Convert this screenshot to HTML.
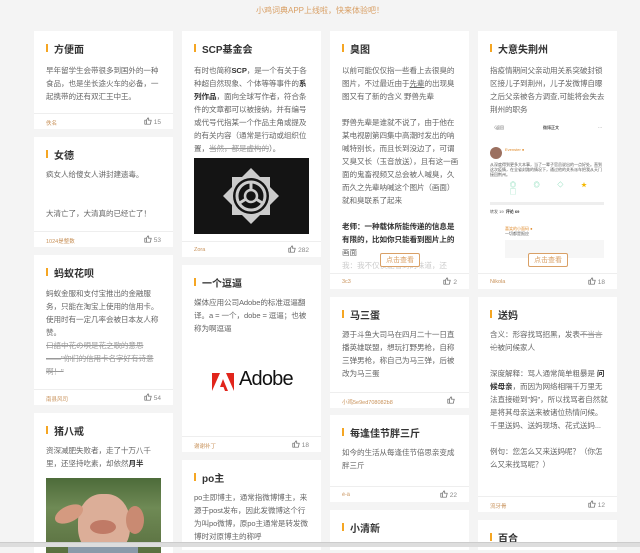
<!DOCTYPE html>
<html><head><meta charset="utf-8"><style>
*{margin:0;padding:0;box-sizing:border-box}
body{width:640px;height:547px;overflow:hidden;background:#f4f4f4;font-family:"Liberation Sans","Noto Sans CJK SC",sans-serif;position:relative}
.top{position:absolute;top:5px;left:0;width:640px;text-align:center;font-size:8px;color:#d9a066}
.c{position:absolute;background:#fff;width:139px;overflow:hidden}
.t{position:absolute;left:12px;top:10px;font-size:10px;font-weight:bold;color:#333;padding-left:8px}
.t:before{content:"";position:absolute;left:0;top:3px;width:2px;height:8px;background:#f5a623}
.b{position:absolute;left:12px;top:33px;width:118px;font-size:7.6px;line-height:13px;color:#666;letter-spacing:-.1px}
.b b{color:#333}
.f{position:absolute;left:0;right:0;height:16px;border-top:1px solid #eee;background:#fff;font-size:5.5px;color:#c8925a}
.f span{position:absolute;left:12px;top:5px}
.f i{position:absolute;right:12px;top:3px;font-style:normal;color:#888;font-size:6.5px}
.f i svg{vertical-align:-1px;margin-right:2px}
s{color:#999}
.btn{position:absolute;border:1px solid #d9a066;color:#d9a066;font-size:7px;padding:1px 5px;background:#fff;border-radius:2px}
.bar{position:absolute;left:0;top:542px;width:640px;height:5px;background:#ddd;border-top:1px solid #ccc}
</style></head><body>
<div class="top">小鸡词典APP上线啦，快来体验吧！</div>

<!-- col1 -->
<div class="c" style="left:34px;top:31px;height:98px">
<div class="t">方便面</div>
<div class="b">早年留学生会带很多到国外的一种食品，也是坐长途火车的必备，一起携带的还有双汇王中王。</div>
<div class="f" style="top:82px"><span>佚名</span><i><svg width="8" height="8" viewBox="0 0 10 10"><path d="M1 4h2v5H1zM3 4l2-3c1 0 1 1 1 2l-.5 1H9l-1 5H3" fill="none" stroke="#666" stroke-width=".9"/></svg>15</i></div>
</div>
<div class="c" style="left:34px;top:137px;height:110px">
<div class="t">女德</div>
<div class="b" style="top:31px">疯女人给傻女人讲封建遗毒。<br><br><br>大清亡了，大清真的已经亡了！</div>
<div class="f" style="top:94px"><span>1024是整数</span><i><svg width="8" height="8" viewBox="0 0 10 10"><path d="M1 4h2v5H1zM3 4l2-3c1 0 1 1 1 2l-.5 1H9l-1 5H3" fill="none" stroke="#666" stroke-width=".9"/></svg>53</i></div>
</div>
<div class="c" style="left:34px;top:255px;height:150px">
<div class="t">蚂蚁花呗</div>
<div class="b" style="top:32px">蚂蚁金服和支付宝推出的金融服务，只能在淘宝上使用的信用卡。使用时有一定几率会被日本友人称赞。<br><s>口語中花の唄是花之歌的意思——"你们的信用卡名字好有诗意啊！"</s></div>
<div class="f" style="top:134px"><span>南县风司</span><i><svg width="8" height="8" viewBox="0 0 10 10"><path d="M1 4h2v5H1zM3 4l2-3c1 0 1 1 1 2l-.5 1H9l-1 5H3" fill="none" stroke="#666" stroke-width=".9"/></svg>54</i></div>
</div>
<div class="c" style="left:34px;top:413px;height:140px">
<div class="t">猪八戒</div>
<div class="b" style="top:31px">资深减肥失败者，走了十万八千里，还坚持吃素，却依然<b>月半</b></div>
<div style="position:absolute;left:12px;top:65px;width:115px;height:75px;background:linear-gradient(#4d6b3a,#6f8a55 40%,#5a7040);overflow:hidden">
<div style="position:absolute;left:32px;top:16px;width:52px;height:62px;border-radius:45%;background:#dcae98"></div>
<div style="position:absolute;left:8px;top:28px;width:30px;height:16px;border-radius:50%;background:#d49a80;transform:rotate(-25deg)"></div>
<div style="position:absolute;left:80px;top:28px;width:18px;height:28px;border-radius:50%;background:#c98a72"></div>
<div style="position:absolute;left:44px;top:42px;width:26px;height:14px;border-radius:50%;background:#c07a66"></div>
<div style="position:absolute;left:22px;top:68px;width:70px;height:10px;background:#8a9aaa"></div>
</div>
</div>

<!-- col2 -->
<div class="c" style="left:182px;top:31px;height:226px">
<div class="t">SCP基金会</div>
<div class="b">有时也简称<b>SCP</b>，是一个有关于各种超自然现象、个体等等事件的<b>系列作品</b>，面向全球写作者，符合条件的文章都可以被接纳，并有编号或代号代指某一个作品主角或提及的有关内容（通常是行动或组织位置，<s>当然，都是虚构的</s>）。</div>
<div style="position:absolute;left:12px;top:127px;width:115px;height:76px;background:#141414">
<svg width="115" height="76" viewBox="0 0 115 76"><g transform="translate(57,38)" fill="none"><path d="M0-28L9-19 19-19 19-9 28 0 19 9 19 19 9 19 0 28-9 19-19 19-19 9-28 0-19-9-19-19-9-19Z" fill="#ccc"/><circle r="18" fill="#141414"/><circle r="14" stroke-width="3" stroke="#ccc"/><circle r="6" stroke-width="2.5" stroke="#ccc"/><path d="M0-6V-14M5 3l8 5M-5 3l-8 5" stroke-width="3" stroke="#ccc"/></g></svg></div>
<div class="f" style="top:210px"><span>Zora</span><i><svg width="8" height="8" viewBox="0 0 10 10"><path d="M1 4h2v5H1zM3 4l2-3c1 0 1 1 1 2l-.5 1H9l-1 5H3" fill="none" stroke="#666" stroke-width=".9"/></svg>282</i></div>
</div>
<div class="c" style="left:182px;top:265px;height:187px">
<div class="t">一个逗逼</div>
<div class="b" style="top:31px">媒体应用公司Adobe的标准逗逼翻译。a = 一个，dobe = 逗逼；也被称为啊逗逼</div>
<svg style="position:absolute;left:30px;top:108px" width="22" height="18" viewBox="0 0 22 18"><path d="M0 0h8L0 18zM14 0h8v18zM11 6l5 12h-3l-1.5-4H8z" fill="#e1251b"/></svg>
<div style="position:absolute;left:57px;top:103px;font-size:20px;color:#111;letter-spacing:-.8px">Adobe</div>
<div class="f" style="top:171px"><span>谢谢补丁</span><i><svg width="8" height="8" viewBox="0 0 10 10"><path d="M1 4h2v5H1zM3 4l2-3c1 0 1 1 1 2l-.5 1H9l-1 5H3" fill="none" stroke="#666" stroke-width=".9"/></svg>18</i></div>
</div>
<div class="c" style="left:182px;top:460px;height:90px">
<div class="t">po主</div>
<div class="b" style="top:31px">po主即博主，通常指微博博主，来源于post发布，因此发微博这个行为叫po微博，原po主通常是转发微博时对原博主的称呼</div>
</div>

<!-- col3 -->
<div class="c" style="left:330px;top:31px;height:258px">
<div class="t">臭图</div>
<div class="b">以前可能仅仅指一些看上去很臭的图片，不过最近由于<u>先辈</u>的出现臭图又有了新的含义 野兽先辈<br><br>野兽先辈是谁就不说了，由于他在某电视剧第四集中高潮时发出的呐喊特别长，而且长到没边了，可谓又臭又长（玉音放送），且有这一画面的鬼畜视频又总会被人喊臭，久而久之先辈呐喊这个图片（画面）就和臭联系了起来<br><br><b>老师：一种载体所能传递的信息是有限的，比如你只能看到图片上的</b>画面<br><span style="color:#ccc">我：我不仅仅能看到的味道，还</span></div>
<div class="btn" style="left:50px;top:222px">点击查看</div>
<div class="f" style="top:242px"><span>3c3</span><i><svg width="8" height="8" viewBox="0 0 10 10"><path d="M1 4h2v5H1zM3 4l2-3c1 0 1 1 1 2l-.5 1H9l-1 5H3" fill="none" stroke="#666" stroke-width=".9"/></svg>2</i></div>
</div>
<div class="c" style="left:330px;top:297px;height:111px">
<div class="t">马三蛋</div>
<div class="b" style="top:31px">源于斗鱼大司马在四月二十一日直播英雄联盟，想玩打野男枪，自称三弹男枪，称自己为马三弹，后被改为马三蛋</div>
<div class="f" style="top:95px"><span>小鸡5e9ed708082b8</span><i><svg width="8" height="8" viewBox="0 0 10 10"><path d="M1 4h2v5H1zM3 4l2-3c1 0 1 1 1 2l-.5 1H9l-1 5H3" fill="none" stroke="#666" stroke-width=".9"/></svg></i></div>
</div>
<div class="c" style="left:330px;top:415px;height:87px">
<div class="t">每逢佳节胖三斤</div>
<div class="b" style="top:31px">如今的生活从每逢佳节倍思亲变成胖三斤</div>
<div class="f" style="top:71px"><span>é-ä</span><i><svg width="8" height="8" viewBox="0 0 10 10"><path d="M1 4h2v5H1zM3 4l2-3c1 0 1 1 1 2l-.5 1H9l-1 5H3" fill="none" stroke="#666" stroke-width=".9"/></svg>22</i></div>
</div>
<div class="c" style="left:330px;top:510px;height:40px">
<div class="t">小清新</div>
</div>

<!-- col4 -->
<div class="c" style="left:478px;top:31px;height:258px">
<div class="t">大意失荆州</div>
<div class="b">指疫情期间父亲动用关系突破封锁区接儿子到荆州，儿子发微博自曝之后父亲被各方调查,可能将会失去荆州的职务</div>
<div style="position:absolute;left:12px;top:91px;width:114px;height:145px;font-size:4px;color:#555;line-height:5px">
<div style="display:flex;justify-content:space-between;padding:3px 2px"><span>〈返回</span><b>微博正文</b><span>···</span></div>
<div style="margin-top:14px;display:flex"><div style="width:12px;height:12px;border-radius:50%;background:#9b7060"></div><div style="margin-left:3px;color:#e08b2c">Evenster ●</div></div>
<div style="margin-top:3px">从深度得到更多大本事，当了一辈子官员说出的一点好处。直到这次疫情，在全省封路的情况下，通过他的关系派车把我从天门接回荆州。</div>
<div style="margin-top:6px;color:#5c9;letter-spacing:8px;padding-left:20px;font-size:6px;line-height:7px">◎ ◎ ◇ <span style="color:#f5b800">★</span> ▢</div>
<div style="margin-top:5px;height:3px;background:#eee"></div>
<div style="margin-top:4px">转发 19 &nbsp;<b style="color:#333">评论 69</b></div>
<div style="margin-top:12px;padding-left:15px;color:#e08b2c">喜笑的小面码 ●<br><span style="color:#555">一切都是报应</span></div>
<div style="margin:4px 0 0 15px;background:#f6f6f6;height:18px"></div>
</div>
<div class="btn" style="left:50px;top:222px">点击查看</div>
<div class="f" style="top:242px"><span>Nikola</span><i><svg width="8" height="8" viewBox="0 0 10 10"><path d="M1 4h2v5H1zM3 4l2-3c1 0 1 1 1 2l-.5 1H9l-1 5H3" fill="none" stroke="#666" stroke-width=".9"/></svg>18</i></div>
</div>
<div class="c" style="left:478px;top:297px;height:215px">
<div class="t">送妈</div>
<div class="b" style="top:31px">含义：形容找骂招黑，发表<s>不当言论</s>被问候家人<br><br>深度解释：骂人通常简单粗暴是 <b>问候母亲</b>，而因为网络相隔千万里无法直接碰到"妈"，所以找骂者自然就是将其母亲送来被诸位热情问候。<br>千里送妈、送妈现场、花式送妈...<br><br>例句：您怎么又来送妈呢？（你怎么又来找骂呢？）</div>
<div class="f" style="top:199px"><span>流牙骨</span><i><svg width="8" height="8" viewBox="0 0 10 10"><path d="M1 4h2v5H1zM3 4l2-3c1 0 1 1 1 2l-.5 1H9l-1 5H3" fill="none" stroke="#666" stroke-width=".9"/></svg>12</i></div>
</div>
<div class="c" style="left:478px;top:520px;height:30px">
<div class="t">百合</div>
</div>
<div class="bar"></div>
</body></html>
